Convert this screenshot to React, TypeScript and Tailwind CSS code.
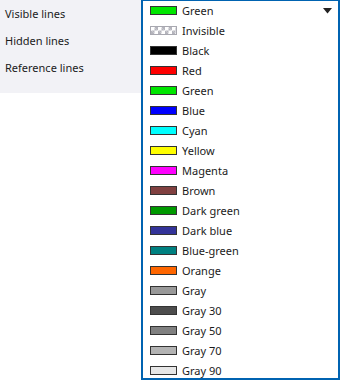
import React from 'react';

type Item = { name: string; color: string };

const items: Item[] = [
  { name: 'Invisible', color: 'checker' },
  { name: 'Black', color: '#000000' },
  { name: 'Red', color: '#ff0000' },
  { name: 'Green', color: '#00e600' },
  { name: 'Blue', color: '#0000ff' },
  { name: 'Cyan', color: '#00ffff' },
  { name: 'Yellow', color: '#ffff00' },
  { name: 'Magenta', color: '#ff00ff' },
  { name: 'Brown', color: '#804040' },
  { name: 'Dark green', color: '#009900' },
  { name: 'Dark blue', color: '#333399' },
  { name: 'Blue-green', color: '#008080' },
  { name: 'Orange', color: '#ff6600' },
  { name: 'Gray', color: '#999999' },
  { name: 'Gray 30', color: '#4d4d4d' },
  { name: 'Gray 50', color: '#808080' },
  { name: 'Gray 70', color: '#b3b3b3' },
  { name: 'Gray 90', color: '#e6e6e6' },
];

const Swatch: React.FC<{ color: string }> = ({ color }) => {
  if (color === 'checker') {
    // invisible = white/grey checkerboard
    return (
      <span
        className="block shrink-0 w-[27px] h-[9px] border border-[#a8a8b0]"
        style={{
          backgroundImage:
            'linear-gradient(45deg,#b4b4bc 25%,transparent 25%,transparent 75%,#b4b4bc 75%),linear-gradient(45deg,#b4b4bc 25%,transparent 25%,transparent 75%,#b4b4bc 75%)',
          backgroundSize: '7px 7px',
          backgroundPosition: '0 0,3.5px 3.5px',
          backgroundColor: '#ffffff',
        }}
      />
    );
  }
  return <span className="block shrink-0 w-[27px] h-[9px] border border-[#333333]" style={{ backgroundColor: color }} />;
};

const Row: React.FC<{ item: Item; arrow?: boolean; first?: boolean }> = ({ item, arrow, first }) => (
  <div className={`flex shrink-0 items-center pl-[7px] pr-[6px] ${first ? 'h-[19px]' : 'h-[20px]'}`}>
    <Swatch color={item.color} />
    <span className="ml-[5px] text-[11px] text-[#1b1b1b] leading-none">{item.name}</span>
    {arrow && (
      <svg className="ml-auto" width="9" height="6" viewBox="0 0 9 6">
        <path d="M0 0 H9 L4.5 5.5 Z" fill="#222" />
      </svg>
    )}
  </div>
);

export default function App() {
  return (
    <div className="flex w-[341px] h-[380px] bg-white" style={{ fontFamily: '"Noto Sans", "Open Sans", sans-serif' }}>
      <div className="w-[141px] h-[93px] bg-[#f2f2f6] flex flex-col pl-[5px] pt-[1px] text-[11px] text-[#1b1b1b]">
        <div className="h-[27px] flex items-center">Visible lines</div>
        <div className="h-[27px] flex items-center">Hidden lines</div>
        <div className="h-[27px] flex items-center">Reference lines</div>
      </div>
      <div className="w-[199px] h-[380px] border-x-2 border-b-2 border-t border-[#0063b1] flex flex-col overflow-hidden">
        <Row item={{ name: 'Green', color: '#00e600' }} arrow first />
        {items.map((it) => (
          <Row key={it.name} item={it} />
        ))}
      </div>
    </div>
  );
}
